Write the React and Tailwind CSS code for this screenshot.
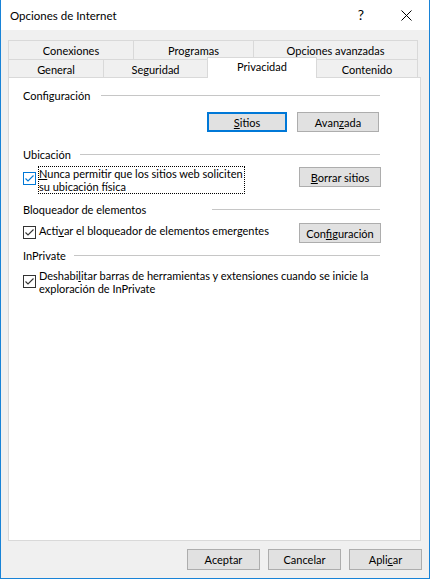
const btn = "flex items-center justify-center bg-[#e1e1e1] border border-[#adadad] text-black";

function Check({ focused }) {
  const c = focused ? "#0078d7" : "#333333";
  return (
    <span
      className={
        "flex h-[13px] w-[13px] shrink-0 items-center justify-center bg-white border " +
        (focused ? "border-[#0078d7]" : "border-[#333333]")
      }
    >
      <svg width="11" height="11" viewBox="0 0 11 11">
        <polyline points="1.5,5.5 4,8 9.5,2.5" fill="none" stroke={c} strokeWidth="1.1" />
      </svg>
    </span>
  );
}

function Header({ label, labelClass, className }) {
  return (
    <div className={"flex h-[15px] items-center " + (className || "")}>
      <span className={"shrink-0 " + labelClass}>{label}</span>
      <div className="h-px flex-1 bg-[#c6c6c6]" />
    </div>
  );
}

export default function App() {
  return (
    <div className="flex h-[579px] w-[430px] flex-col border-x border-b border-[#1883d7] bg-[#f0f0f0] font-['Segoe_UI',Lato,'Liberation_Sans',sans-serif] text-[11px] leading-[15px] text-black">
      {/* title bar */}
      <div className="flex h-[30px] shrink-0 items-center bg-white pl-[9px]">
        <span className="text-[11.5px]">Opciones de Internet</span>
        <span className="ml-auto mr-[37px] text-[14px] leading-none">?</span>
        <svg className="mr-[17px]" width="11" height="11" viewBox="0 0 11 11">
          <path d="M0.5 0.5 L10.5 10.5 M10.5 0.5 L0.5 10.5" stroke="#000" strokeWidth="1" />
        </svg>
      </div>

      <div className="flex flex-1 flex-col px-[7px] pt-[10px]">
        {/* tabs */}
        <div className="flex h-[19px] w-[410px]">
          <div className="flex h-[19px] w-[125px] items-center justify-center border-l border-t border-[#d9d9d9]">Conexiones</div>
          <div className="flex h-[19px] w-[120px] items-center justify-center border-l border-t border-[#d9d9d9]">Programas</div>
          <div className="flex h-[19px] w-[165px] items-center justify-center border-x border-t border-[#d9d9d9]">Opciones avanzadas</div>
        </div>
        <div className="flex h-[18px] w-[410px] items-start">
          <div className="flex h-[18px] w-[95px] items-center justify-center border-l border-t border-[#d9d9d9] pt-[1px]">General</div>
          <div className="flex h-[18px] w-[104px] items-center justify-center border-l border-t border-[#d9d9d9] pt-[1px]">Seguridad</div>
          <div className="relative z-10 -mt-[2px] flex h-[21px] w-[110px] items-start justify-center border-x border-t border-[#d9d9d9] bg-white pt-[1px]">Privacidad</div>
          <div className="flex h-[18px] w-[101px] items-center justify-center border-r border-t border-[#d9d9d9] pt-[1px]">Contenido</div>
        </div>

        {/* panel */}
        <div className="flex h-[464px] w-[413px] flex-col border border-[#d9d9d9] bg-white pl-[14px] pr-[40px] pt-[10px]">
          <Header label="Configuración" labelClass="w-[78px]" />
          <div className="mt-[9px] flex">
            <div className="ml-[184px] flex h-[20px] w-[80px] items-center justify-center border-2 border-[#0078d7] bg-[#e1e1e1]">
              <span><u>S</u>itios</span>
            </div>
            <div className={btn + " ml-[10px] h-[20px] w-[82px]"}>
              <span>Avan<u>z</u>ada</span>
            </div>
          </div>

          <Header label="Ubicación" labelClass="w-[57px]" className="mt-[15px]" />
          <div className="mt-[4px] flex items-start">
            <div className="mt-[6px]">
              <Check focused />
            </div>
            <div className="ml-[2px] border border-dotted border-black pr-[1px] leading-[13px]">
              <div className="whitespace-nowrap"><u>N</u>unca permitir que los sitios web soliciten</div>
              <div className="whitespace-nowrap">su ubicación física</div>
            </div>
            <div className={btn + " ml-auto -mr-px mt-[1px] h-[20px] w-[82px]"}>
              <span><u>B</u>orrar sitios</span>
            </div>
          </div>

          <Header label="Bloqueador de elementos" labelClass="w-[189px]" className="mt-[8px]" />
          <div className="mt-[6px] flex items-start">
            <div className="mt-[3px]">
              <Check />
            </div>
            <span className="ml-[3px] whitespace-nowrap">Acti<u>v</u>ar el bloqueador de elementos emergentes</span>
            <div className={btn + " ml-auto -mr-px h-[20px] w-[82px]"}>
              <span>Con<u>f</u>iguración</span>
            </div>
          </div>

          <Header label="InPrivate" labelClass="w-[51px]" className="mt-[5px]" />
          <div className="mt-[6px] flex items-start">
            <div className="mt-[6px]">
              <Check />
            </div>
            <div className="ml-[3px] leading-[13px]">
              <div className="whitespace-nowrap">Deshabi<u>l</u>itar barras de herramientas y extensiones cuando se inicie la</div>
              <div className="whitespace-nowrap">exploración de InPrivate</div>
            </div>
          </div>
        </div>

        {/* dialog buttons */}
        <div className="mt-[8px] flex justify-end gap-[8px]">
          <div className={btn + " h-[21px] w-[73px]"}>Aceptar</div>
          <div className={btn + " h-[21px] w-[73px]"}>Cancelar</div>
          <div className={btn + " h-[21px] w-[73px]"}>
            <span>Apli<u>c</u>ar</span>
          </div>
        </div>
      </div>
    </div>
  );
}
